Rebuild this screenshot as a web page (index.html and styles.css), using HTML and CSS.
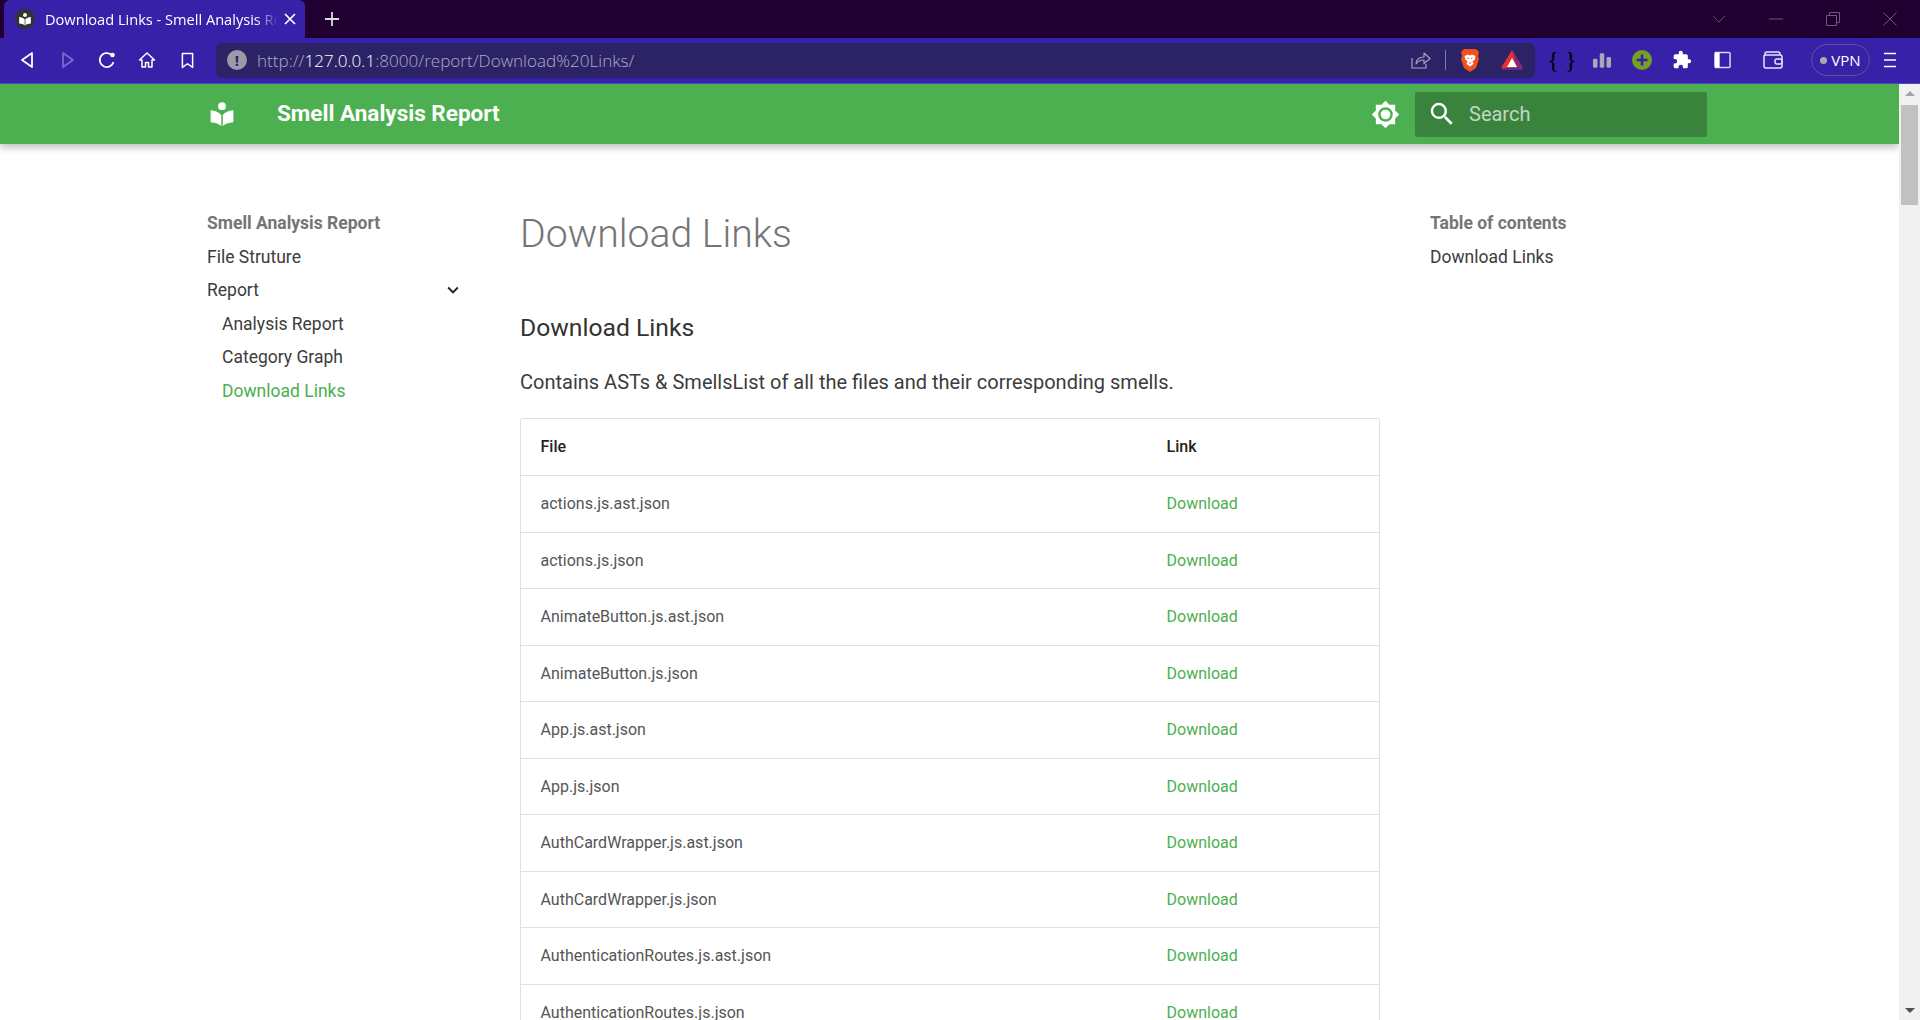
FILE: index.html
```html
<!DOCTYPE html>
<html>
<head>
    <title>Download Links - Smell Analysis Report</title>
    <link rel="stylesheet" href="styles.css">
</head>
<body>
    <div class="tab-strip">
        <div class="tab">
            <span class="favicon">
                <svg viewBox="0 0 24 24" width="14" height="14"><circle cx="12" cy="5" r="3.4" fill="#fff"/><path d="M2 8.500c4 .2 7.500 1.600 9.400 4V23C9 21 5.500 20 2 19.800ZM22 8.500c-4 .2-7.500 1.600-9.400 4V23c2.400-2 5.900-3 9.400-3.200Z" fill="#fff"/></svg>
            </span>
            <span class="tab-title">Download Links - Smell Analysis Report</span>
            <svg class="tab-close" viewBox="0 0 12 12" width="12" height="12"><path d="M1 1l10 10M11 1L1 11" stroke="#fff" stroke-width="1.700"/></svg>
        </div>
        <svg class="new-tab" viewBox="0 0 16 16" width="16" height="16"><path d="M8 1v14M1 8h14" stroke="#ddd" stroke-width="1.800"/></svg>
        <div class="window-controls">
            <svg viewBox="0 0 14 8" width="14" height="8"><path d="M1 1l6 6 6-6" fill="none" stroke="#5d4a6b" stroke-width="1"/></svg>
            <svg viewBox="0 0 14 2" width="14" height="2"><path d="M0 1h14" stroke="#6b5a78" stroke-width="1"/></svg>
            <svg viewBox="0 0 14 14" width="14" height="14"><path d="M.5 3.500h10v10H.5zM3.500 3.500v-3h10v10h-3" fill="none" stroke="#6b5a78" stroke-width="1"/></svg>
            <svg viewBox="0 0 14 14" width="14" height="14"><path d="M.5.5l13 13M13.500.5l-13 13" stroke="#6b5a78" stroke-width="1"/></svg>
        </div>
    </div>

    <div class="toolbar">
        <div class="tool-group">
            <button class="tool"><svg viewBox="0 0 16 18" width="16" height="18"><path d="M13 2v14L3 9Z" fill="none" stroke="#fff" stroke-width="1.800" stroke-linejoin="round"/></svg></button>
            <button class="tool"><svg viewBox="0 0 16 18" width="16" height="18"><path d="M4 2v14l10-7Z" fill="none" stroke="#7a6bcc" stroke-width="1.800" stroke-linejoin="round"/></svg></button>
            <button class="tool"><svg viewBox="0 0 18 18" width="18" height="18"><path d="M15.500 11A7 7 0 1 1 13 3.500" fill="none" stroke="#fff" stroke-width="1.800"/><circle cx="14.500" cy="4" r="2.300" fill="#fff"/></svg></button>
            <button class="tool"><svg viewBox="0 0 18 18" width="18" height="18"><path d="M1.500 9L9 2l7.500 7H14v7h-3.500v-4.500h-3V16H4V9Z" fill="none" stroke="#fff" stroke-width="1.500" stroke-linejoin="round"/></svg></button>
            <button class="tool"><svg viewBox="0 0 14 18" width="13" height="17"><path d="M1.500 1.500h11v15L7 12.500l-5.500 4Z" fill="none" stroke="#fff" stroke-width="1.600" stroke-linejoin="round"/></svg></button>
        </div>

        <div class="address-bar">
            <span class="site-alert">!</span>
            <span class="url">http://<span class="url-host">127.0.0.1</span>:8000/report/Download%20Links/</span>
            <svg class="addr-share" viewBox="0 0 20 18" width="20" height="18"><path d="M1 7v10h14v-4" fill="none" stroke="#a7a3bd" stroke-width="1.200"/><path d="M5 13c0-4 3-7 8-7V2l6 5.500-6 5V9c-4 0-6 1-8 4Z" fill="none" stroke="#a7a3bd" stroke-width="1.200" stroke-linejoin="round"/></svg>
            <span class="addr-divider"></span>
            <svg class="addr-brave" viewBox="0 0 20 24" width="20" height="24"><path d="M4 1h12l3 3-1 4 1 3-3 9-6 4-6-4-3-9 1-3-1-4Z" fill="#f1511b"/><path d="M4.500 8l3.500-1.500 2 1 2-1L15.500 8l-1 4-2 1 1 3-3.500 2.500L6.500 16l1-3-2-1Z" fill="#fff"/><path d="M7.500 10l1.500.5M12.500 10l-1.500.5M9 15h2" stroke="#f1511b" stroke-width="1"/></svg>
            <svg class="addr-bat" viewBox="0 0 24 22" width="24" height="22"><path d="M12 1l11 18H1Z" fill="#e5302f"/><path d="M12 1l11 18h-6Z" fill="#7b2a83"/><path d="M1 19h22l-1.500 2h-19Z" fill="#5c2c8a"/><path d="M12 9l5 9H7Z" fill="#fff"/></svg>
        </div>

        <div class="tool-group">
            <button class="tool tool-braces">{ }</button>
            <button class="tool"><svg viewBox="0 0 20 16" width="18" height="15"><rect x="0" y="6" width="5" height="10" rx="1.500" fill="#a9a9b5"/><rect x="7.500" y="0" width="5" height="16" rx="1.500" fill="#a9a9b5"/><rect x="15" y="4" width="5" height="12" rx="1.500" fill="#a9a9b5"/></svg></button>
            <button class="tool"><svg viewBox="0 0 20 20" width="20" height="20"><circle cx="10" cy="10" r="10" fill="#76a022"/><path d="M10 4.500v11M4.500 10h11" stroke="#3621a8" stroke-width="2.600"/></svg></button>
            <button class="tool"><svg viewBox="0 0 24 24" width="20" height="20"><path d="M20.500 11H19V7a2 2 0 0 0-2-2h-4V3.500a2.500 2.500 0 0 0-5 0V5H4a2 2 0 0 0-2 2v3.800h1.500a2.700 2.700 0 0 1 0 5.400H2V20a2 2 0 0 0 2 2h3.800v-1.500a2.700 2.700 0 0 1 5.400 0V22H17a2 2 0 0 0 2-2v-4h1.500a2.500 2.500 0 0 0 0-5Z" fill="#fff"/></svg></button>
            <button class="tool"><svg viewBox="0 0 18 18" width="17" height="18"><rect x="1" y="1" width="16" height="16" rx="1" fill="none" stroke="#d8d4f3" stroke-width="1.600"/><rect x="1" y="1" width="5" height="16" fill="#fff"/></svg></button>
        </div>
        <button class="tool tool-wallet"><svg viewBox="0 0 20 18" width="20" height="18"><path d="M2 4V3a2 2 0 0 1 2-2h11a2 2 0 0 1 2 2v1M1 5a1 1 0 0 1 1-1h15a2 2 0 0 1 2 2v9a2 2 0 0 1-2 2H3a2 2 0 0 1-2-2Z" fill="none" stroke="#e6e3fa" stroke-width="1.500"/><rect x="12" y="8" width="7" height="5" rx="2" fill="#3621a8" stroke="#e6e3fa" stroke-width="1.500"/></svg></button>
        <div class="vpn-pill"><span class="vpn-dot"></span>VPN</div>
        <button class="tool"><svg viewBox="0 0 14 16" width="14" height="16"><path d="M1 1.500h12M1 8h12M1 14.500h12" stroke="#fff" stroke-width="1.600"/></svg></button>
    </div>

    <div class="viewport">
        <div class="page">
            <header class="site-header">
                <svg class="site-logo" viewBox="0 0 24 24" width="26" height="26"><circle cx="12" cy="4.800" r="3.600" fill="#fff"/><path d="M1.500 8.500c4.300.3 8 1.800 9.800 4.500v10C9 21 5 20 1.500 19.700ZM22.500 8.500c-4.300.3-8 1.800-9.800 4.500v10c2.300-2 6.300-3 9.800-3.300Z" fill="#fff"/></svg>
                <span class="site-title">Smell Analysis Report</span>
                <svg class="theme-toggle" viewBox="0 0 24 24" width="29" height="29"><path d="M12 8a4 4 0 0 0-4 4 4 4 0 0 0 4 4 4 4 0 0 0 4-4 4 4 0 0 0-4-4m0 10a6 6 0 0 1-6-6 6 6 0 0 1 6-6 6 6 0 0 1 6 6 6 6 0 0 1-6 6m8-9.310V4h-4.690L12 .69 8.690 4H4v4.690L.69 12 4 15.310V20h4.690L12 23.310 15.310 20H20v-4.690L23.310 12 20 8.690Z" fill="#fff"/></svg>
                <div class="search-box">
                    <svg viewBox="0 0 24 24" width="30" height="30"><path d="M9.500 3A6.500 6.500 0 0 1 16 9.500c0 1.610-.59 3.090-1.560 4.230l.27.27h.79l5 5-1.500 1.500-5-5v-.79l-.27-.27A6.516 6.516 0 0 1 9.500 16 6.500 6.500 0 0 1 3 9.500 6.500 6.500 0 0 1 9.500 3m0 2C7 5 5 7 5 9.500S7 14 9.500 14 14 12 14 9.500 12 5 9.500 5Z" fill="#fff"/></svg>
                    <span class="search-label">Search</span>
                </div>
            </header>

            <div class="content">
                <nav class="sidebar">
                    <div class="nav-title">Smell Analysis Report</div>
                    <a class="nav-link">File Struture</a>
                    <a class="nav-link nav-toggle">Report
                        <svg viewBox="0 0 24 24" width="22" height="22"><path d="M7.410 8.580 12 13.170l4.590-4.590L18 10l-6 6-6-6Z" fill="#222"/></svg>
                    </a>
                    <a class="nav-link nav-nested">Analysis Report</a>
                    <a class="nav-link nav-nested">Category Graph</a>
                    <a class="nav-link nav-nested nav-active">Download Links</a>
                </nav>

                <main class="article">
                    <h1>Download Links</h1>
                    <h2>Download Links</h2>
                    <p>Contains ASTs &amp; SmellsList of all the files and their corresponding smells.</p>
                    <div class="table-wrap">
                        <table>
                            <thead>
                                <tr><th class="col-file">File</th><th>Link</th></tr>
                            </thead>
                            <tbody>
                                <tr><td>actions.js.ast.json</td><td><a>Download</a></td></tr>
                                <tr><td>actions.js.json</td><td><a>Download</a></td></tr>
                                <tr><td>AnimateButton.js.ast.json</td><td><a>Download</a></td></tr>
                                <tr><td>AnimateButton.js.json</td><td><a>Download</a></td></tr>
                                <tr><td>App.js.ast.json</td><td><a>Download</a></td></tr>
                                <tr><td>App.js.json</td><td><a>Download</a></td></tr>
                                <tr><td>AuthCardWrapper.js.ast.json</td><td><a>Download</a></td></tr>
                                <tr><td>AuthCardWrapper.js.json</td><td><a>Download</a></td></tr>
                                <tr><td>AuthenticationRoutes.js.ast.json</td><td><a>Download</a></td></tr>
                                <tr><td>AuthenticationRoutes.js.json</td><td><a>Download</a></td></tr>
                            </tbody>
                        </table>
                    </div>
                </main>

                <aside class="toc">
                    <div class="nav-title">Table of contents</div>
                    <a class="nav-link">Download Links</a>
                </aside>
            </div>
        </div>

        <div class="scrollbar">
            <span class="scroll-up"></span>
            <div class="scroll-thumb"></div>
            <span class="scroll-down"></span>
        </div>
    </div>
</body>
</html>
```

FILE: styles.css
```css
* {
    box-sizing: border-box;
}

html, body {
    height: 100%;
}

body {
    margin: 0;
    display: flex;
    flex-direction: column;
    overflow: hidden;
    background-color: white;
    font-family: Roboto, sans-serif;
}

/* browser chrome */
.tab-strip {
    height: 38px;
    flex: none;
    display: flex;
    align-items: center;
    padding-left: 4px;
    background-color: #1f0031;
}

.tab {
    width: 301px;
    height: 38px;
    display: flex;
    align-items: center;
    padding: 0 9px 0 11px;
    background-color: #3621a8;
    border-radius: 6px 6px 0 0;
}

.favicon {
    width: 20px;
    height: 20px;
    flex: none;
    display: flex;
    align-items: center;
    justify-content: center;
    border-radius: 50%;
    background-color: #333;
}

.tab-title {
    flex: 1;
    margin-left: 10px;
    overflow: hidden;
    white-space: nowrap;
    color: white;
    font-family: "Open Sans", sans-serif;
    font-size: 14.600px;
    -webkit-mask-image: linear-gradient(to right, black 90%, transparent);
    mask-image: linear-gradient(to right, black 90%, transparent);
}

.tab-close {
    flex: none;
    margin-left: 6px;
}

.new-tab {
    margin-left: 19px;
}

.window-controls {
    margin-left: auto;
    display: flex;
    align-items: center;
    gap: 43px;
    padding-right: 23px;
}

.toolbar {
    height: 46px;
    flex: none;
    display: flex;
    align-items: center;
    padding: 0 8px 1px 7px;
    background-color: #3621a8;
    border-bottom: 1px solid #5a45bd;
}

.tool-group {
    display: flex;
    align-items: center;
}

.tool {
    width: 40px;
    height: 36px;
    padding: 0;
    display: flex;
    align-items: center;
    justify-content: center;
    border: none;
    background: none;
}

.tool-braces {
    color: #000;
    font-family: "Liberation Serif", serif;
    font-size: 24px;
    white-space: nowrap;
}

.tool-wallet {
    margin-left: 11px;
}

.address-bar {
    width: 1319px;
    height: 35px;
    margin: 0 7px 0 9px;
    display: flex;
    align-items: center;
    padding: 0 10px 0 11px;
    background-color: #2b2366;
    border-radius: 6px;
}

.site-alert {
    width: 20px;
    height: 20px;
    flex: none;
    border-radius: 50%;
    background-color: #9c9aa8;
    color: #2b2366;
    font-family: "Open Sans", sans-serif;
    font-size: 15px;
    font-weight: 700;
    line-height: 20px;
    text-align: center;
}

.url {
    flex: 1;
    margin-left: 10px;
    color: #aeaac4;
    font-family: "Open Sans", sans-serif;
    font-size: 17.100px;
    font-weight: 300;
    white-space: nowrap;
}

.url-host {
    color: white;
}

.addr-divider {
    width: 1px;
    height: 20px;
    margin: 0 14px;
    background-color: #7f7aa0;
}

.addr-bat {
    margin-left: 20px;
    margin-right: 1px;
}

.vpn-pill {
    width: 59px;
    height: 32px;
    margin-left: 18px;
    display: flex;
    align-items: center;
    justify-content: center;
    gap: 4px;
    border: 1.5px solid #5c5296;
    border-radius: 16px;
    color: white;
    font-family: "Open Sans", sans-serif;
    font-size: 15px;
}

.vpn-dot {
    width: 7px;
    height: 7px;
    border-radius: 50%;
    background-color: #a9a9b5;
}

/* page */
.viewport {
    flex: 1;
    min-height: 0;
    display: flex;
}

.page {
    flex: 1;
    min-width: 0;
    overflow: hidden;
}

.site-header {
    height: 60px;
    display: flex;
    align-items: center;
    padding-left: 209px;
    background-color: #4caf50;
    box-shadow: 0 0 8px rgba(0,0,0,0.1), 0 4px 8px rgba(0,0,0,0.2);
    position: relative;
}

.site-title {
    margin: 0 0 2px 42px;
    color: white;
    font-size: 22.500px;
    font-weight: 700;
}

.theme-toggle {
    margin-left: auto;
}

.search-box {
    width: 292px;
    height: 45px;
    margin: 0 192px 0 15px;
    display: flex;
    align-items: center;
    padding-left: 12px;
    gap: 12px;
    background-color: #3a833d;
    border-radius: 2px;
}

.search-label {
    color: rgba(255,255,255,0.7);
    font-size: 20px;
}

.content {
    display: flex;
    padding: 63px 0 0 207px;
}

.sidebar {
    width: 313px;
    flex: none;
    padding-right: 56px;
}

.nav-title {
    height: 33px;
    color: #757575;
    font-size: 17.500px;
    font-weight: 700;
    line-height: 33px;
}

.nav-link {
    display: flex;
    align-items: center;
    height: 33.500px;
    color: #3c3c3c;
    font-size: 17.500px;
}

.nav-toggle {
    justify-content: space-between;
}

.nav-nested {
    padding-left: 15px;
}

.nav-active {
    color: #4caf50;
}

.article {
    width: 860px;
    flex: none;
}

h1 {
    margin: -1px 0 0 0;
    color: #757575;
    font-size: 39.200px;
    font-weight: 300;
    line-height: 56px;
}

h2 {
    margin: 48px 0 0 0;
    color: #333;
    font-size: 24.700px;
    font-weight: 400;
    line-height: 36px;
}

p {
    margin: 18px 0 0 0;
    color: #3c3c3c;
    font-size: 20px;
    line-height: 36px;
}

.table-wrap {
    margin-top: 18px;
    border: 1px solid #e0e0e0;
    border-radius: 2px;
}

table {
    width: 100%;
    border-collapse: collapse;
    font-size: 16px;
}

th, td {
    height: 56.500px;
    padding: 0 20px 0 19.500px;
    text-align: left;
}

th {
    padding-bottom: 2px;
    color: #222;
    font-weight: 500;
}

.col-file {
    width: 626px;
}

td {
    border-top: 1px solid #e0e0e0;
    color: #555;
}

td a {
    color: #4caf50;
}

.toc {
    margin-left: 50px;
    width: 290px;
}

.scrollbar {
    width: 21px;
    flex: none;
    display: flex;
    flex-direction: column;
    align-items: center;
    background-color: #f1f1f1;
    padding-top: 7px;
}

.scroll-up {
    width: 0;
    height: 0;
    border-left: 5px solid transparent;
    border-right: 5px solid transparent;
    border-bottom: 5px solid #a3a3a3;
}

.scroll-thumb {
    width: 17px;
    height: 100px;
    margin-top: 9px;
    background-color: #c1c1c1;
}

.scroll-down {
    margin-top: auto;
    margin-bottom: 7px;
    width: 0;
    height: 0;
    border-left: 5px solid transparent;
    border-right: 5px solid transparent;
    border-top: 5px solid #505050;
}
```
